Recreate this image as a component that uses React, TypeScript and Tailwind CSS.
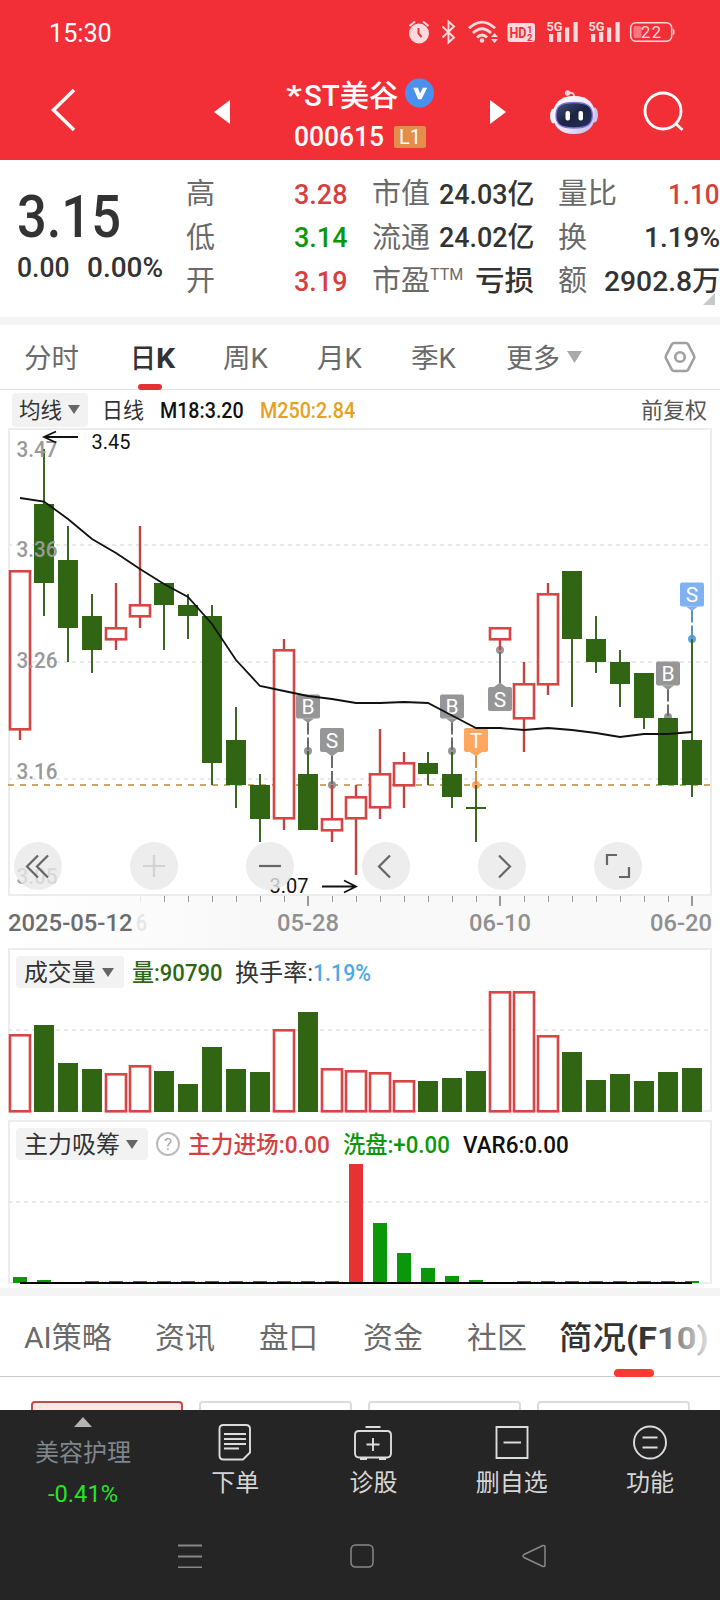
import { useLayoutEffect, useRef, useState, type ReactNode } from 'react';

/** Single-line text that is condensed or expanded to a given advance width. */
function Fit({ w, className = '', children }: { w: number; className?: string; children: ReactNode }) {
  const ref = useRef<HTMLSpanElement>(null);
  const [scale, setScale] = useState(1);
  useLayoutEffect(() => {
    if (ref.current && ref.current.offsetWidth > 0) setScale(w / ref.current.offsetWidth);
  }, [w]);
  return (
    <span className={`block shrink-0 whitespace-nowrap ${className}`} style={{ width: w }}>
      <span ref={ref} className="inline-block origin-left" style={{ transform: `scaleX(${scale})` }}>
        {children}
      </span>
    </span>
  );
}

function Caret({ className = '' }: { className?: string }) {
  return (
    <svg viewBox="0 0 12 9" className={`h-[9px] w-3 shrink-0 fill-[#666] ${className}`}>
      <path d="M0 0H12L6 9Z" />
    </svg>
  );
}

// high, body top, body bottom, low (canvas y), rising
type Candle = [number, number, number, number, boolean];
const CANDLES: Candle[] = [
  [571, 571, 729, 740, true],
  [449, 504, 583, 616, false],
  [526, 560, 628, 662, false],
  [594, 616, 650, 673, false],
  [583, 628, 639, 650, true],
  [526, 605, 616, 628, true],
  [583, 583, 605, 650, false],
  [594, 605, 616, 639, false],
  [605, 616, 763, 785, false],
  [707, 740, 785, 808, false],
  [774, 785, 819, 842, false],
  [639, 650, 818, 830, true],
  [751, 774, 830, 830, false],
  [785, 819, 830, 842, true],
  [785, 797, 818, 875, true],
  [729, 774, 807, 819, true],
  [752, 763, 785, 808, true],
  [752, 763, 774, 785, false],
  [752, 774, 797, 808, false],
  [785, 807, 809, 842, false],
  [628, 628, 639, 650, true],
  [662, 684, 718, 752, true],
  [583, 594, 684, 695, true],
  [571, 571, 639, 707, false],
  [616, 639, 662, 673, false],
  [650, 662, 684, 707, false],
  [673, 673, 718, 729, false],
  [718, 718, 785, 785, false],
  [639, 740, 785, 797, false],
];
const AVERAGE = [
  498, 501.5, 519, 539, 553, 569, 584, 597, 624, 660, 686, 691, 696, 699, 703, 703, 702, 703, 715.5, 728, 728, 730, 728,
  730, 733, 737, 734, 734, 732,
];
const VOLUME = [
  1035, 1025, 1063, 1069, 1074, 1066, 1071, 1084, 1047, 1069, 1072, 1030, 1012, 1069, 1071, 1073, 1081, 1081, 1078, 1071,
  992, 992, 1036, 1052, 1080, 1074, 1081, 1072, 1068,
];
const FLOW = [
  1277, 1280, 1283, 1281, 1281, 1281, 1281, 1281, 1281, 1281, 1281, 1281, 1281, 1281, 1164, 1223, 1253, 1268, 1276, 1280,
  1283, 1281, 1281, 1281, 1281, 1281, 1281, 1281, 1281,
];
const cx = (i: number) => 20 + 24 * i;

function Grid({ y }: { y: number }) {
  return <line x1="8" x2="710" y1={y} y2={y} stroke="#e9e9e9" strokeWidth="2" strokeDasharray="4 4" />;
}

function Bar({ x, top, bottom, up }: { x: number; top: number; bottom: number; up: boolean }) {
  return up ? (
    <rect x={x - 10} y={top + 0.3} width="20" height={bottom - top} fill="#fff" stroke="#d94545" strokeWidth="2.6" />
  ) : (
    <rect x={x - 10} y={top} width="20" height={bottom - top} fill="#306613" />
  );
}

type Mark = { x: number; top: number; dot: number; letter: string; color: string; line: string; below?: boolean };
const MARKS: Mark[] = [
  { x: 308, top: 694.5, dot: 751, letter: 'B', color: '#969696', line: '#6b6b6b' },
  { x: 332, top: 728, dot: 785, letter: 'S', color: '#969696', line: '#6b6b6b' },
  { x: 452, top: 694.5, dot: 751, letter: 'B', color: '#969696', line: '#6b6b6b' },
  { x: 476, top: 728, dot: 785, letter: 'T', color: '#ffa75e', line: '#d0924c' },
  { x: 500, top: 687, dot: 650, letter: 'S', color: '#969696', line: '#6b6b6b', below: true },
  { x: 668, top: 661.5, dot: 717, letter: 'B', color: '#969696', line: '#6b6b6b' },
  { x: 692, top: 582.5, dot: 639, letter: 'S', color: '#80b2f2', line: '#5b93bb' },
];

function PriceChart() {
  return (
    <svg viewBox="10 430 700 464" className="block h-[464px] w-[700px] overflow-visible">
      <Grid y={545} />
      <Grid y={662} />
      <Grid y={779} />
      <line x1="8" x2="710" y1="785" y2="785" stroke="#cba468" strokeWidth="2" strokeDasharray="6 6" />
      {MARKS.map((m) => (
        <circle key={m.x} cx={m.x} cy={m.dot} r="4" fill={m.x === 692 ? '#5fa4e0' : m.color} />
      ))}
      {CANDLES.map(([high, top, bottom, low, up], i) => (
        <g key={i}>
          {high < top && <line x1={cx(i)} x2={cx(i)} y1={high} y2={top} stroke={up ? '#c04444' : '#3c6628'} strokeWidth={up ? 2.4 : 2} />}
          {low > bottom && <line x1={cx(i)} x2={cx(i)} y1={bottom} y2={low} stroke={up ? '#c04444' : '#3c6628'} strokeWidth={up ? 2.4 : 2} />}
          <Bar x={cx(i)} top={top} bottom={bottom} up={up} />
        </g>
      ))}
      {MARKS.map((m) => (
        <g key={m.x}>
          {m.below ? (
            <>
              <line x1={m.x} x2={m.x} y1={m.dot + 2} y2={m.top - 3} stroke={m.line} strokeWidth="2" />
              <path d={`M${m.x - 6} ${m.top}L${m.x} ${m.top - 4.5}L${m.x + 6} ${m.top}Z`} fill={m.color} />
            </>
          ) : (
            <>
              <line x1={m.x} x2={m.x} y1={m.top + 27} y2={m.top + 40} stroke={m.line} strokeWidth="2" />
              <line x1={m.x} x2={m.x} y1={m.top + 43} y2={m.dot - 1} stroke={m.line} strokeWidth="2" />
              <path d={`M${m.x - 6} ${m.top + 24}L${m.x} ${m.top + 28.5}L${m.x + 6} ${m.top + 24}Z`} fill={m.color} />
            </>
          )}
          <rect x={m.x - 12} y={m.top} width="24" height="24" rx="2" fill={m.color} />
          <text x={m.x} y={m.top + 19.5} textAnchor="middle" fontSize="21" fill="#fff">
            {m.letter}
          </text>
        </g>
      ))}
      <polyline points={AVERAGE.map((y, i) => `${cx(i)},${y}`).join(' ')} fill="none" stroke="#111" strokeWidth="1.8" />
      <g fontSize="22.5" fontWeight="500" fill="#999">
        <text x="16.5" y="456.5" textLength="41" lengthAdjust="spacingAndGlyphs">3.47</text>
        <text x="16.5" y="556.5" textLength="41" lengthAdjust="spacingAndGlyphs">3.36</text>
        <text x="16.5" y="667.5" textLength="41" lengthAdjust="spacingAndGlyphs">3.26</text>
        <text x="16.5" y="778.5" textLength="41" lengthAdjust="spacingAndGlyphs">3.16</text>
        <text x="16.5" y="883.5" textLength="41" lengthAdjust="spacingAndGlyphs">3.05</text>
      </g>
      <g fontSize="20" fill="#111">
        <text x="91.5" y="449" textLength="39" lengthAdjust="spacingAndGlyphs">3.45</text>
        <text x="269.5" y="893" textLength="39" lengthAdjust="spacingAndGlyphs">3.07</text>
      </g>
      <g fill="none" stroke="#111" strokeWidth="1.8">
        <path d="M78 437H44M56 431.5L44 437L56 442.5" />
        <path d="M322 886.5H356M344 880.5L356 886.5L344 892.5" />
      </g>
    </svg>
  );
}

const BUTTONS: { d: string; color: string }[] = [
  { d: 'M24 13.5L13 24.5L24 35.5M34 13.5L23 24.5L34 35.5', color: '#666' },
  { d: 'M13 24H35M24 13V35', color: '#d2d2d2' },
  { d: 'M13 24H35', color: '#666' },
  { d: 'M28 13.5L17 24.5L28 35.5', color: '#666' },
  { d: 'M21 13.5L32 24.5L21 35.5', color: '#666' },
  { d: 'M13 23V13H23M35 25V35H25', color: '#666' },
];

function DateAxis() {
  return (
    <svg viewBox="0 896 720 52" className="block h-[52px] w-[720px] shrink-0">
      <defs>
        <linearGradient id="axisFade" x1="0" x2="1" y1="0" y2="0">
          <stop offset="0" stopColor="#fff" />
          <stop offset="0.35" stopColor="#f8f8f8" />
          <stop offset="1" stopColor="#f9f9f9" />
        </linearGradient>
      </defs>
      <rect x="8" y="896" width="704" height="52" fill="url(#axisFade)" />
      {Array.from({ length: 24 }, (_, k) => {
        const i = k + 5;
        const major = i === 12 || i === 20 || i === 28;
        return (
          <line key={i} x1={cx(i) + (major ? 0 : 0.5)} x2={cx(i) + (major ? 0 : 0.5)} y1="896" y2={major ? 906 : 902} stroke={i === 5 ? '#e6e6e6' : '#999'} strokeWidth={major ? 2 : 1} />
        );
      })}
      <g fontSize="24.5" fontWeight="500" fill="#909090">
        <text x="277" y="931" textLength="62" lengthAdjust="spacingAndGlyphs">05-28</text>
        <text x="469" y="931" textLength="62" lengthAdjust="spacingAndGlyphs">06-10</text>
        <text x="650" y="931" textLength="62" lengthAdjust="spacingAndGlyphs">06-20</text>
        <text x="136" y="931" textLength="11" lengthAdjust="spacingAndGlyphs" fill="#e6e6e6">6</text>
        <text x="8" y="931" textLength="124.500" lengthAdjust="spacingAndGlyphs" fill="#6c6c6c">2025-05-12</text>
      </g>
    </svg>
  );
}

function StatusIcons() {
  return (
    <svg viewBox="400 12 280 40" className="h-10 w-[280px]" fill="#fddadb">
      <circle cx="419" cy="33.5" r="10" />
      <path d="M409.5 26L415 21.5M428.5 26L423 21.5" stroke="#fddadb" strokeWidth="2" fill="none" />
      <path d="M418.5 28V33.5L421.5 37" stroke="#f22f37" strokeWidth="2" fill="none" />
      <path d="M442.5 26.5L454 37.5L448.5 42.5V21.5L454 26.5L442.5 37.5" stroke="#fddadb" strokeWidth="1.9" fill="none" />
      <g stroke="#fddadb" strokeWidth="2.8" fill="none">
        <path d="M469 28.2Q482 16 495 28.2" />
        <path d="M473 33Q482 24.5 491 33" />
        <path d="M477 37.5Q482 32.5 487 37.5" />
      </g>
      <circle cx="482" cy="40.5" r="2.2" />
      <path d="M494.5 33L498 37H491ZM494.5 43L498 39H491Z" />
      <rect x="507.5" y="23" width="27.500" height="19" rx="3" />
      <text x="509.5" y="38" fontSize="15" fontWeight="700" fill="#f22f37" textLength="17" lengthAdjust="spacingAndGlyphs">HD</text>
      <text x="527" y="32.5" fontSize="9.5" fontWeight="700" fill="#f22f37">1</text>
      <text x="527" y="40.5" fontSize="9.5" fontWeight="700" fill="#f22f37">2</text>
      {[547, 589].map((x) => (
        <g key={x}>
          <text x={x - 0.5} y="30.5" fontSize="13.5" fontWeight="700" textLength="16" lengthAdjust="spacingAndGlyphs">5G</text>
          <rect x={x + 2} y="34" width="4.2" height="8" />
          <rect x={x + 10} y="32" width="4.2" height="10" />
          <rect x={x + 18} y="27.5" width="4.2" height="14.5" />
          <rect x={x + 26.5} y="22" width="4.2" height="20" />
        </g>
      ))}
      <rect x="630.7" y="22.8" width="41" height="18.5" rx="5" fill="none" stroke="#fddadb" strokeWidth="1.5" />
      <rect x="633.5" y="26" width="8" height="12" rx="2" fill="#f8767c" />
      <path d="M673 28.5Q674.7 29 674.7 32T673 35.5Z" />
      <text x="641" y="38" fontSize="16.5" textLength="20" lengthAdjust="spacing">22</text>
    </svg>
  );
}

function Robot() {
  return (
    <svg viewBox="548 86 52 48" className="ml-[42px] h-12 w-[52px]">
      <defs>
        <linearGradient id="shell" x1="0" x2="1" y1="0" y2="1">
          <stop offset="0" stopColor="#ffffff" />
          <stop offset="0.6" stopColor="#e8e6fb" />
          <stop offset="1" stopColor="#b9b4ee" />
        </linearGradient>
        <linearGradient id="visor" x1="0" x2="1" y1="0" y2="1">
          <stop offset="0" stopColor="#45517a" />
          <stop offset="0.5" stopColor="#1b2442" />
          <stop offset="1" stopColor="#253058" />
        </linearGradient>
      </defs>
      <path d="M566 91.5Q575 88.5 574 96" fill="none" stroke="#f7c9d3" strokeWidth="2" />
      <circle cx="567.5" cy="91" r="2.7" fill="#f9d3dc" />
      <ellipse cx="553.5" cy="114" rx="3.5" ry="7.5" fill="#f4f1fd" />
      <ellipse cx="594.5" cy="113" rx="3.5" ry="7.5" fill="#c9c5f3" />
      <path d="M574 94C588 94 595 101.5 595 113S588 132 574 132S553 124.5 553 113S560 94 574 94Z" fill="url(#shell)" />
      <path d="M574 100.500C587 100.500 592.300 104 592.300 113.300S587 126 574 126S556 122.500 556 113.300S561 100.500 574 100.500Z" fill="url(#visor)" stroke="#7d6fe0" strokeWidth="1.3" />
      <rect x="565.5" y="109" width="4.5" height="9.5" rx="2" fill="#fff" />
      <rect x="578.5" y="109" width="4.5" height="9.5" rx="2" fill="#fff" />
    </svg>
  );
}

function Header() {
  return (
    <header className="h-[160px] shrink-0 bg-[#f22f37] text-white">
      <div className="flex h-16 items-center justify-between pr-10 pl-[49px]">
        <Fit w={63} className="pt-0.5 text-[26px] leading-none">15:30</Fit>
        <StatusIcons />
      </div>
      <div className="flex h-24 items-center">
        <svg viewBox="50 86 28 48" className="ml-[50px] h-12 w-7 -translate-y-0.5" fill="none" stroke="#fff" strokeWidth="3.5">
          <path d="M74 90L53.5 110L74 130" />
        </svg>
        <svg viewBox="0 0 16 24" className="ml-[136px] h-6 w-4" fill="#fff"><path d="M16 0V24L0 12Z" /></svg>
        <div className="ml-[56px] flex h-24 w-[148px] flex-col">
          <div className="flex h-[58px] items-center">
            <Fit w={16} className="pt-[7px] text-[27px] leading-none font-medium">*</Fit>
            <Fit w={94} className="ml-0.5 pt-[5px] text-[30px] leading-none font-medium">ST美谷</Fit>
            <svg viewBox="0 0 30 30" className="ml-[7px] h-[30px] w-[30px]">
              <circle cx="15" cy="15" r="15" fill="#4a90ee" />
              <path d="M8.5 9.5H13.5L15.5 15.5L18.5 9.5H23L17 21.5H13.5Z" fill="#fff" />
            </svg>
          </div>
          <div className="flex h-[29px] items-center">
            <Fit w={90} className="ml-2 pt-0.5 text-[27px] leading-none font-medium">000615</Fit>
            <span className="ml-2.5 flex h-[22px] w-8 items-center justify-center rounded-[2px] bg-[#e38f4b] text-[20px] leading-none">L1</span>
          </div>
        </div>
        <svg viewBox="0 0 16 24" className="ml-[56px] h-6 w-4" fill="#fff"><path d="M0 0V24L16 12Z" /></svg>
        <Robot />
        <svg viewBox="642 90 44 44" className="ml-[42px] h-11 w-11" fill="none" stroke="#fff" strokeWidth="2.8">
          <circle cx="663" cy="111" r="18" />
          <path d="M675.5 123.5L682.5 130" />
        </svg>
      </div>
    </header>
  );
}

const SMALL = 'text-[28px] leading-none font-medium';
const LABEL = 'text-[29px] leading-none text-[#6a6a6a]';

function Summary() {
  return (
    <section className="flex h-[157px] shrink-0 bg-white text-[#333]">
      <div className="w-[187px] pt-[27px] pl-[17px]">
        <Fit w={104} className="text-[60px] leading-[60px] font-medium">3.15</Fit>
        <div className="mt-[5px] flex gap-[17px]">
          <Fit w={53} className="text-[28px] leading-[32px] font-medium">0.00</Fit>
          <Fit w={76} className="text-[28px] leading-[32px] font-medium">0.00%</Fit>
        </div>
      </div>
      <div className="-ml-px flex w-[162px] flex-col pt-[13px]">
        {[['高', '3.28', 'text-[#d63f3f]'], ['低', '3.14', 'text-[#0a970a]'], ['开', '3.19', 'text-[#d63f3f]']].map(([k, v, c]) => (
          <div key={k} className="flex h-[43.5px] items-center justify-between">
            <span className={LABEL}>{k}</span>
            <Fit w={54} className={`${SMALL} ${c}`}>{v}</Fit>
          </div>
        ))}
      </div>
      <div className="ml-6 flex w-[162px] flex-col pt-[13px]">
        <div className="flex h-[43.5px] items-center justify-between"><span className={LABEL}>市值</span><Fit w={95} className={SMALL}>24.03亿</Fit></div>
        <div className="flex h-[43.5px] items-center justify-between"><span className={LABEL}>流通</span><Fit w={95} className={SMALL}>24.02亿</Fit></div>
        <div className="flex h-[43.5px] items-center justify-between">
          <span className={`${LABEL} flex`}>市盈<span className="text-[16px]">TTM</span></span>
          <Fit w={59} className={SMALL}>亏损</Fit>
        </div>
      </div>
      <div className="relative ml-6 flex w-[162px] flex-col pt-[13px]">
        <div className="flex h-[43.5px] items-center justify-between"><Fit w={59} className={LABEL}>量比</Fit><Fit w={52} className={`${SMALL} text-[#d63f3f]`}>1.10</Fit></div>
        <div className="flex h-[43.5px] items-center justify-between"><span className={LABEL}>换</span><Fit w={76} className={SMALL}>1.19%</Fit></div>
        <div className="flex h-[43.5px] items-center justify-between"><span className={LABEL}>额</span><Fit w={116} className={SMALL}>2902.8万</Fit></div>
        <svg viewBox="0 0 12 12" className="absolute right-[5px] bottom-3 h-3 w-3" fill="#c8c8c8"><path d="M12 0V12H0Z" /></svg>
      </div>
    </section>
  );
}

function PeriodTabs() {
  const tab = 'pt-1 text-[27px] leading-none text-[#6a6a6a]';
  return (
    <nav className="flex h-[65px] shrink-0 items-center border-b border-[#e2e2e2] bg-white">
      <Fit w={55} className={`${tab} ml-6`}>分时</Fit>
      <div className="relative ml-[51px] flex pt-1 text-[27px] leading-none text-[#333]">
        <Fit w={26} className="font-medium">日</Fit>
        <Fit w={19} className="font-bold">K</Fit>
        <span className="absolute -bottom-[17px] left-[8px] h-1.5 w-6 rounded-full bg-[#e03236]" />
      </div>
      <Fit w={45} className={`${tab} ml-[48px]`}>周K</Fit>
      <Fit w={45} className={`${tab} ml-[49px]`}>月K</Fit>
      <Fit w={45} className={`${tab} ml-[49px]`}>季K</Fit>
      <Fit w={54} className={`${tab} ml-[50px]`}>更多</Fit>
      <svg viewBox="0 0 15 12" className="ml-[7px] h-3 w-[15px]" fill="#aaa"><path d="M0 0H15L7.5 12Z" /></svg>
      <svg viewBox="0 0 32 32" className="ml-[82px] h-8 w-8" fill="none" stroke="#a0a0a0" strokeWidth="2.6">
        <path d="M10 2H22Q23.5 2 24.2 3.3L30 14.7Q30.6 16 30 17.3L24.2 28.7Q23.5 30 22 30H10Q8.5 30 7.8 28.7L2 17.3Q1.4 16 2 14.7L7.8 3.3Q8.5 2 10 2Z" />
        <circle cx="16" cy="16" r="4.8" />
      </svg>
    </nav>
  );
}

function PanelHeader({ children }: { children: ReactNode }) {
  return <div className="flex h-[38px] items-center pt-1.5 pl-1.5 text-[23.5px] leading-none font-medium">{children}</div>;
}

const BOTTOM_TABS: [string, number, string][] = [
  ['AI策略', 88, 'ml-6'],
  ['资讯', 60, 'ml-[43px]'],
  ['盘口', 59, 'ml-[44px]'],
  ['资金', 60, 'ml-[45px]'],
  ['社区', 60, 'ml-[44px]'],
];

const ACTIONS: [string, ReactNode][] = [
  ['下单', <path key="d" d="M28 33.5H8.5Q4.5 33.5 4.5 29.5V3Q4.5 -1 8.5 -1H31Q35 -1 35 3V26.5L28 33.5ZM9 8H31M9 13H31M9 18H31M9 22.5H24" />],
  ['诊股', <path key="d" d="M12.5 1H27.5M6 5H34Q38 5 38 9V27Q38 31.5 34 31.5H6Q2 31.5 2 27V9Q2 5 6 5ZM20 12V25M13.5 18.5H26.5M7 33H14M26 33H33" />],
  ['删自选', <path key="d" d="M4.5 1H35.5V32H4.5ZM11.5 16.5H29" />],
  ['功能', <g key="d"><circle cx="20" cy="16.5" r="16" /><path d="M12.5 11.5H27.5M12.5 21.5H27.5" /></g>],
];

export default function App() {
  return (
    <main className="flex h-[1600px] w-[720px] flex-col overflow-hidden bg-white [font-family:Roboto,'Noto_Sans_CJK_SC',sans-serif]">
      <Header />
      <Summary />
      <div className="h-2 shrink-0 bg-[#f4f4f4]" />
      <PeriodTabs />

      <div className="flex h-[38px] shrink-0 items-center pt-px pl-3 text-[22px] leading-none text-[#333]">
        <div className="flex h-[34px] w-[76px] items-center rounded bg-[#f2f2f2] pl-[7px]">
          <Fit w={43} className="pt-0.5">均线</Fit>
          <Caret className="ml-1.5" />
        </div>
        <Fit w={42} className="ml-[14px] pt-0.5">日线</Fit>
        <Fit w={84} className="ml-4 pt-0.5 font-medium text-[#111]">M18:3.20</Fit>
        <Fit w={95} className="ml-[16px] pt-0.5 font-medium text-[#e5a11f]">M250:2.84</Fit>
        <Fit w={66} className="ml-[286px] pt-[3px] text-[#555]">前复权</Fit>
      </div>

      <div className="relative mx-2 h-[468px] shrink-0 border-2 border-[#ececec]">
        <PriceChart />
        <div className="absolute top-[412px] left-1 flex gap-[68px]">
          {BUTTONS.map((b) => (
            <svg key={b.d} viewBox="0 0 48 48" className="h-12 w-12 shrink-0" fill="none" stroke={b.color} strokeWidth="2.2">
              <circle cx="24" cy="24" r="24" fill="#e8e8e8" fillOpacity="0.8" stroke="none" />
              <path d={b.d} />
            </svg>
          ))}
        </div>
      </div>
      <DateAxis />

      <section className="mx-2 h-[164px] shrink-0 border-2 border-[#ececec]">
        <PanelHeader>
          <div className="flex h-8 w-[108px] items-center rounded bg-[#f2f2f2] pl-2 font-normal text-[#333]">
            <Fit w={72} className="pt-1">成交量</Fit>
            <Caret className="ml-1.5" />
          </div>
          <Fit w={90} className="ml-2 pt-[3px] text-[#306613]">量:90790</Fit>
          <Fit w={78} className="ml-[13px] pt-1 font-normal text-[#333]">换手率:</Fit>
          <Fit w={58} className="pt-[3px] text-[#4ba9e6]">1.19%</Fit>
        </PanelHeader>
        <svg viewBox="10 988 700 122" className="block h-[122px] w-[700px] overflow-visible">
          <Grid y={1030} />
          {VOLUME.map((top, i) => <Bar key={i} x={cx(i)} top={top} bottom={CANDLES[i][4] ? 1111 : 1112} up={CANDLES[i][4]} />)}
        </svg>
      </section>

      <section className="mx-2 mt-2 h-[164px] shrink-0 border-2 border-[#ececec]">
        <PanelHeader>
          <div className="flex h-8 w-[132px] items-center rounded bg-[#f2f2f2] pl-2 font-normal text-[#333]">
            <Fit w={96} className="pt-1">主力吸筹</Fit>
            <Caret className="ml-1.5" />
          </div>
          <span className="ml-2 flex h-6 w-6 items-center justify-center rounded-full border-2 border-[#bbb] text-[17px] font-normal text-[#aaa]">?</span>
          <Fit w={142} className="ml-2 pt-1 text-[#d63f3f]">主力进场:0.00</Fit>
          <Fit w={107} className="ml-[13px] pt-1 text-[#0a970a]">洗盘:+0.00</Fit>
          <Fit w={106} className="ml-[13px] pt-1 text-[#111]">VAR6:0.00</Fit>
        </PanelHeader>
        <svg viewBox="10 1160 700 122" className="block h-[122px] w-[700px] overflow-visible">
          <Grid y={1202} />
          {FLOW.map((top, i) => (
            <rect key={i} x={cx(i) - 7} y={top} width="14" height={1283 - top} fill={i === 14 ? '#e63232' : '#0a970a'} />
          ))}
          <line x1="20" x2="692" y1="1283" y2="1283" stroke="#000" strokeWidth="2" />
        </svg>
      </section>
      <div className="mt-1 h-2 shrink-0 bg-[#f4f4f4]" />

      <nav className="relative flex h-[81px] shrink-0 items-center border-b border-[#c8c8c8]">
        {BOTTOM_TABS.map(([label, w, gap]) => (
          <Fit key={label} w={w} className={`${gap} pt-[3px] text-[30px] leading-none text-[#6a6a6a]`}>{label}</Fit>
        ))}
        <div className="relative ml-[32px] flex pt-[3px] text-[32px] leading-none text-[#333]">
          <Fit w={67} className="font-medium">简况</Fit>
          <Fit w={83} className="font-bold">(F10)</Fit>
          <span className="absolute top-[50px] left-[55px] h-2 w-10 rounded-full bg-[#fa3a32]" />
        </div>
        <div className="absolute top-0 right-0 h-[76px] w-[72px] bg-linear-to-r from-white/0 to-white" />
      </nav>

      <div className="flex h-[33px] shrink-0 gap-4 overflow-hidden pt-6 pl-[31px]">
        <div className="h-12 w-[152px] shrink-0 rounded border-2 border-[#c44b4b] bg-[#fde6e6]" />
        {[0, 1, 2].map((k) => <div key={k} className="h-12 w-[153px] shrink-0 rounded border-2 border-[#dcdcdc]" />)}
      </div>

      <footer className="flex h-[190px] shrink-0 flex-col bg-[#252525]">
        <div className="flex h-[120px]">
          <div className="flex w-[166px] flex-col items-center pt-[7px]">
            <svg viewBox="0 0 18 10" className="h-2.5 w-[18px]" fill="#b4b4b4"><path d="M9 0L18 10H0Z" /></svg>
            <Fit w={96} className="mt-3.5 text-[24px] leading-none text-[#7f868c]">美容护理</Fit>
            <Fit w={70} className="mt-[17px] text-[24px] leading-none text-[#27e427]">-0.41%</Fit>
          </div>
          <div className="flex">
            {ACTIONS.map(([label, icon]) => (
              <div key={label} className="flex w-[138.3px] flex-col items-center pt-4 text-[24px] leading-none text-[#d6d6d6]">
                <svg viewBox="0 0 40 34" className="h-[34px] w-10 overflow-visible" fill="none" stroke="#dcdcdc" strokeWidth="1.9">{icon}</svg>
                <span className="mt-[11px] whitespace-nowrap">{label}</span>
              </div>
            ))}
          </div>
        </div>
        <div className="flex h-[52px] items-center gap-[148px] pl-[178px]">
          <svg viewBox="0 0 24 24" className="h-6 w-6" fill="none" stroke="#888" strokeWidth="1.8"><path d="M0 1.5H24M0 12.5H24M0 23.3H24" /></svg>
          <svg viewBox="0 0 24 24" className="h-6 w-6" fill="none" stroke="#888" strokeWidth="1.5"><rect x="1" y="1" width="22" height="22" rx="4.5" /></svg>
          <svg viewBox="0 0 24 24" className="h-6 w-6" fill="none" stroke="#888" strokeWidth="1.5"><path d="M21 1.5L2 10.5Q0 12 2 13.5L21 22.5Q23 23 23 21V3Q23 1 21 1.5Z" /></svg>
        </div>
      </footer>
    </main>
  );
}
